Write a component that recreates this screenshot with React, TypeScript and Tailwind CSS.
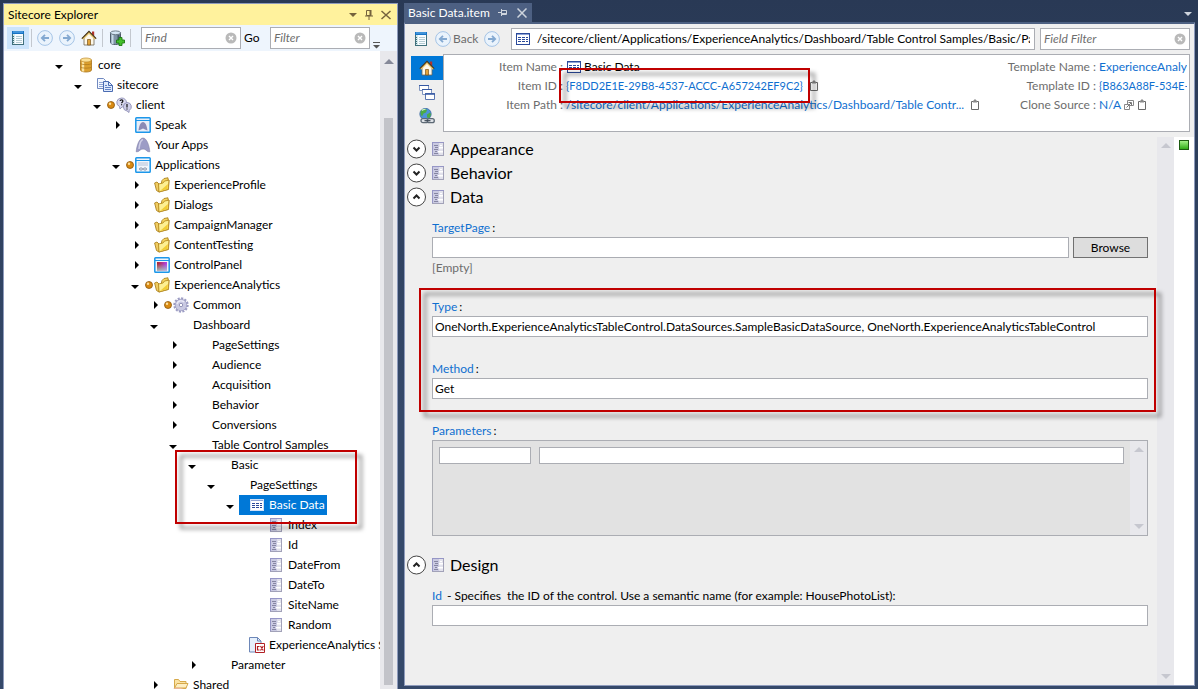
import { ReactNode, useState } from 'react';

type IconName =
  | 'database' | 'pages' | 'chat' | 'speak' | 'apps' | 'window' | 'folder' | 'palette'
  | 'gear' | 'table' | 'form' | 'script' | 'share';

interface TreeItem {
  level: number;
  label: string;
  icon?: IconName;
  state?: 'open' | 'closed';
  dot?: boolean;
  selected?: boolean;
  marked?: boolean;
}

const treeItems: TreeItem[] = [
  { level: 0, label: 'core', icon: 'database', state: 'open' },
  { level: 1, label: 'sitecore', icon: 'pages', state: 'open' },
  { level: 2, label: 'client', icon: 'chat', state: 'open', dot: true },
  { level: 3, label: 'Speak', icon: 'speak', state: 'closed' },
  { level: 3, label: 'Your Apps', icon: 'apps' },
  { level: 3, label: 'Applications', icon: 'window', state: 'open', dot: true },
  { level: 4, label: 'ExperienceProfile', icon: 'folder', state: 'closed' },
  { level: 4, label: 'Dialogs', icon: 'folder', state: 'closed' },
  { level: 4, label: 'CampaignManager', icon: 'folder', state: 'closed' },
  { level: 4, label: 'ContentTesting', icon: 'folder', state: 'closed' },
  { level: 4, label: 'ControlPanel', icon: 'palette', state: 'closed' },
  { level: 4, label: 'ExperienceAnalytics', icon: 'folder', state: 'open', dot: true },
  { level: 5, label: 'Common', icon: 'gear', state: 'closed', dot: true },
  { level: 5, label: 'Dashboard', state: 'open' },
  { level: 6, label: 'PageSettings', state: 'closed' },
  { level: 6, label: 'Audience', state: 'closed' },
  { level: 6, label: 'Acquisition', state: 'closed' },
  { level: 6, label: 'Behavior', state: 'closed' },
  { level: 6, label: 'Conversions', state: 'closed' },
  { level: 6, label: 'Table Control Samples', state: 'open' },
  { level: 7, label: 'Basic', state: 'open', marked: true },
  { level: 8, label: 'PageSettings', state: 'open' },
  { level: 9, label: 'Basic Data', icon: 'table', state: 'open', selected: true },
  { level: 10, label: 'Index', icon: 'form' },
  { level: 10, label: 'Id', icon: 'form' },
  { level: 10, label: 'DateFrom', icon: 'form' },
  { level: 10, label: 'DateTo', icon: 'form' },
  { level: 10, label: 'SiteName', icon: 'form' },
  { level: 10, label: 'Random', icon: 'form' },
  { level: 9, label: 'ExperienceAnalytics S', icon: 'script' },
  { level: 7, label: 'Parameter', state: 'closed' },
  { level: 5, label: 'Shared', icon: 'share', state: 'closed' },
];

function Svg({ children, className = 'w-4 h-4' }: { children: ReactNode; className?: string }) {
  return (
    <svg viewBox="0 0 16 16" className={`shrink-0 ${className}`} fill="none" aria-hidden="true">
      {children}
    </svg>
  );
}

function TableIcon({ light }: { light?: boolean }) {
  return (
    <Svg>
      <rect x="1.5" y="2.5" width="13" height="11" fill="#fff" stroke={light ? '#cfe0f7' : '#2b4a9b'} />
      <path d="M2 3.5h12" stroke="#8ea3d6" />
      <path d="M3 6.5h3M7 6.5h3M11 6.5h2M3 8.5h3M7 8.5h3M11 8.5h2M3 10.5h3M7 10.5h3M11 10.5h2" stroke="#2b4a9b" />
    </Svg>
  );
}

function FormIcon() {
  return (
    <Svg>
      <rect x="2.5" y="1.5" width="11" height="13" fill="#e2e2ec" stroke="#a2a2b8" />
      <path d="M3 2h6v12H3z" fill="#cacae2" />
      <path d="M2 1.5h12M2.5 1v13" stroke="#9696c6" />
      <path d="M4 4.5h4M5 6.5h3M4 8.5h4M5 10.5h2M4 12.5h4" stroke="#8686a2" />
      <path d="M9 6h4v1.500H9zM8 10h5v1.500H8zM10 4h2v1h-2z" fill="#fff" />
    </Svg>
  );
}

function ListIcon() {
  return (
    <Svg>
      <rect x="2.5" y="1.5" width="11" height="13" fill="#f8fcff" stroke="#40707c" />
      <path d="M2 1h12v3H2z" fill="#1673c4" />
      <path d="M3 2h10" stroke="#6cb4ef" />
      <path d="M3 4h2v10H3z" fill="#d4e9ec" />
      <path d="M6 6.5h6M6 8.5h6M6 10.5h6M6 12.5h6" stroke="#b4cbd2" />
      <path d="M3 6.5h1M3 8.5h1M3 10.5h1M3 12.5h1" stroke="#40707c" />
    </Svg>
  );
}

function ArrowCircle({ direction }: { direction: 'left' | 'right' }) {
  return (
    <Svg>
      <circle cx="8" cy="8" r="7.4" fill="#eaf3fc" stroke="#a5c4e6" />
      <path
        d={direction === 'left' ? 'M12 8H5M8 4.8 4.8 8 8 11.2' : 'M4 8h7M8 4.8 11.2 8 8 11.2'}
        stroke="#84a9d1"
        strokeWidth="1.8"
      />
    </Svg>
  );
}

function HomeIcon() {
  return (
    <Svg>
      <path d="M11 1.5h2.2V6H11z" fill="#b3322b" />
      <path d="M3 8 8 3l5 5v7H3z" fill="#fdf8ea" stroke="#6f6654" strokeWidth=".8" />
      <path d="M1.5 9 8 2.5 14.5 9" stroke="#e6c46a" strokeWidth="2" />
      <path d="M.8 8.6 8 1.4l7.2 7.2" stroke="#3f301c" strokeWidth="1.1" />
      <path d="M6.5 9.5h3V15h-3z" fill="#e2a43c" stroke="#7a5318" strokeWidth=".7" />
    </Svg>
  );
}

function DatabaseAddIcon() {
  return (
    <Svg>
      <path d="M1.5 2.5v10c0 1.2 2 2 5 2s5-.8 5-2v-10z" fill="#7f93a6" stroke="#4c5a68" />
      <path d="M3.5 3.5V14" stroke="#c9dae8" strokeWidth="2" />
      <path d="M9.5 4v9" stroke="#46586a" strokeWidth="2" />
      <ellipse cx="6.5" cy="2.8" rx="5" ry="1.9" fill="#d5e6f4" stroke="#6d7d8a" />
      <path d="M10 7.5h3V10h2.500v3H13v2.500h-3V13H7.500v-3H10z" fill="#43c02c" stroke="#1d7a12" strokeWidth=".9" />
    </Svg>
  );
}

function WindowsIcon() {
  return (
    <Svg>
      <path d="M.5 1.5h9v5h-9z" fill="#fff" stroke="#7f94bf" />
      <path d="M0 1.5h10" stroke="#3558a3" />
      <path d="M3.5 5.5h9v5h-9z" fill="#fff" stroke="#7f94bf" />
      <path d="M3 5.5h10" stroke="#3558a3" />
      <path d="M6.5 9.500h9v6h-9z" fill="#fff" stroke="#5a76b0" />
      <path d="M6 10h10" stroke="#3558a3" strokeWidth="1.5" />
    </Svg>
  );
}

function GlobeLinkIcon() {
  return (
    <Svg>
      <circle cx="6.5" cy="6" r="5.7" fill="#4d93d9" stroke="#2f5f99" strokeWidth=".7" />
      <path d="M3 2c2-1.4 4-1 5 0L7 4.5 4.500 5.500 3 8.500C1 6.500 1 3.500 3 2zM8 6.500l3-2 1 2-1.500 3.500-2.500-.5z" fill="#4cab45" />
      <path d="M3 2.5c1-1 2.5-1.2 3.5-1" stroke="#c8f0b8" strokeWidth="1.2" />
      <rect x="2" y="10.700" width="7" height="4" rx="2" fill="#dfe3e8" stroke="#5d6975" strokeWidth="1.3" />
      <rect x="8.300" y="10.700" width="7" height="4" rx="2" fill="#dfe3e8" stroke="#5d6975" strokeWidth="1.3" />
      <path d="M5.5 12.700h6" stroke="#3d4955" strokeWidth="1.2" />
    </Svg>
  );
}

function ClipboardIcon() {
  return (
    <svg viewBox="0 0 10 12" className="w-[10px] h-3 shrink-0" fill="none" aria-hidden="true">
      <path d="M1.5 2.5h7v8h-7z" fill="#fff" stroke="#6a6a6a" />
      <path d="M3 3.5v-2h1v-1h2v1h1v2z" fill="#8a8a8a" />
    </svg>
  );
}

function CloneIcon() {
  return (
    <svg viewBox="0 0 10 12" className="w-[10px] h-3 shrink-0" fill="none" aria-hidden="true">
      <path d="M3.5 1.5h6v5h-6z" stroke="#888" />
      <path d="M.5 5.5h5v5h-5z" fill="#fff" stroke="#888" />
      <path d="M2.5 8.5 7 4M4.5 3.5h3v3" stroke="#777" />
    </svg>
  );
}

function NodeIcon({ name, selected }: { name: IconName; selected?: boolean }) {
  switch (name) {
    case 'database':
      return (
        <Svg>
          <path d="M2.5 3v10c0 1.2 2.500 2 5.500 2s5.500-.8 5.500-2V3z" fill="#dca02e" stroke="#a8741a" strokeWidth=".8" />
          <path d="M5 4v10.500" stroke="#fbe3a0" strokeWidth="2.4" />
          <path d="M2.5 6.500c1 1.500 10 1.500 11 0M2.500 10c1 1.500 10 1.500 11 0" stroke="#a8741a" strokeWidth=".7" />
          <ellipse cx="8" cy="3" rx="5.5" ry="2" fill="#fbdf93" stroke="#bd8a2c" strokeWidth=".7" />
        </Svg>
      );
    case 'pages':
      return (
        <Svg>
          <path d="M.5 1.5h6l2 2v8h-8z" fill="#f4f8ff" stroke="#7089c0" />
          <path d="M2 5.5h5M2 7.5h5M2 9.5h4" stroke="#8fa5d6" />
          <path d="M6.5 4.5h5l4 4v6h-9z" fill="#dfeafd" stroke="#4b6cb2" />
          <path d="M11.5 4.5v4h4" stroke="#4b6cb2" />
          <path d="M8 8.5h2M8 10.5h6M8 12.5h6" stroke="#6283c6" />
        </Svg>
      );
    case 'chat':
      return (
        <Svg>
          <path d="M5.5 1a5 4.5 0 0 0-2 8.500L4 12l2-2a4.700 4.700 0 0 0 4.500-4.500A4.700 4.700 0 0 0 5.500 1z" fill="#d9d9ef" stroke="#8585ae" strokeWidth=".8" />
          <path d="M11 5.500a4.300 4.300 0 0 0 0 8.500l2 1.500.3-2.200A4.200 4.200 0 0 0 11 5.500z" fill="#cfcfe9" stroke="#8585ae" strokeWidth=".8" />
          <path d="M4.200 4c0-1.600 2.700-1.600 2.700.1 0 1.200-1.300 1-1.300 2.200M5.600 7.200v1M11 7v3.500M11 11.400v1" stroke="#111" strokeWidth="1.2" />
        </Svg>
      );
    case 'speak':
      return (
        <Svg>
          <rect x=".8" y=".8" width="14.4" height="14.4" rx=".8" fill="#e8eef8" stroke="#1c97ea" strokeWidth="1.5" />
          <path d="M1 3.5h14" stroke="#1c97ea" />
          <path d="M3.500 13.500c.6-4.500 2-8.500 4.500-8.500s3.900 4 4.500 8.500l-2.500-1-2-1-2 1z" fill="#8a8ab5" />
        </Svg>
      );
    case 'apps':
      return (
        <Svg>
          <path d="M1.200 14.800C1.700 8.500 4.300 1 8 1s6.300 7.500 6.800 13.800c-1.700 0-3-.6-4-1.900-1.500-1.100-4-1.100-5.500 0-1 1.300-2.400 1.900-4.100 1.900z" fill="#9c9cc6" stroke="#7f7fa6" strokeWidth=".6" />
          <path d="M4 12C4.500 7 6 3 8 2.500" stroke="#cfcfe6" strokeWidth="1.5" />
        </Svg>
      );
    case 'window':
      return (
        <Svg>
          <rect x=".8" y=".8" width="14.4" height="14.4" rx=".8" fill="#f2f6fb" stroke="#1c97ea" strokeWidth="1.5" />
          <path d="M1 3.5h14" stroke="#1c97ea" />
          <path d="M3 5h10v4H3z" fill="#d3dcea" />
          <rect x="4.5" y="11" width="3" height="2" rx="1" stroke="#75829b" strokeWidth=".9" />
          <rect x="8.5" y="11" width="3" height="2" rx="1" stroke="#75829b" strokeWidth=".9" />
        </Svg>
      );
    case 'folder':
      return (
        <Svg>
          <path d="M8 3.5 10 1.500l4-.7v2l1 .2-.5 9.500L5 15z" fill="#f5d560" stroke="#ab8220" strokeWidth=".9" />
          <path d="m.6 6 2.400-1L5 7v8l-2.500-1.500z" fill="#f0cc62" stroke="#ab8220" strokeWidth=".9" />
          <path d="M4.500 7 9 6l1.500-2 4.500-.8-.8 9L5 15z" fill="#fdef92" stroke="#b88c22" strokeWidth=".9" />
          <path d="m6 14 7.500-2 .4-5z" fill="#f2cd35" />
        </Svg>
      );
    case 'palette':
      return (
        <Svg>
          <defs>
            <linearGradient id="hue" x1="0" x2="1">
              <stop stopColor="#b02a2a" />
              <stop offset="1" stopColor="#b044f0" />
            </linearGradient>
            <linearGradient id="fade" x1="0" x2="0" y1="0" y2="1">
              <stop offset=".2" stopColor="#a0d8d0" stopOpacity="0" />
              <stop offset="1" stopColor="#a0d8d0" stopOpacity=".8" />
            </linearGradient>
          </defs>
          <rect x=".8" y=".8" width="14.4" height="14.4" rx=".8" fill="#f2f6fb" stroke="#1c97ea" strokeWidth="1.5" />
          <path d="M1 3.5h14" stroke="#1c97ea" />
          <path d="M3 5h10v8.500H3z" fill="url(#hue)" />
          <path d="M3 5h10v8.500H3z" fill="url(#fade)" />
        </Svg>
      );
    case 'gear':
      return (
        <Svg>
          <circle cx="8" cy="8" r="6.7" stroke="#9c9cc4" strokeWidth="2" strokeDasharray="2.1 1.4" />
          <circle cx="8" cy="8" r="5.8" fill="#c9c9e2" stroke="#9292ba" strokeWidth=".7" />
          <path d="M4 7a4.200 4.200 0 0 1 7-2" stroke="#ececf8" strokeWidth="1.3" />
          <circle cx="8" cy="8" r="1.7" fill="#fff" stroke="#8080aa" strokeWidth=".8" />
        </Svg>
      );
    case 'table':
      return <TableIcon light={selected} />;
    case 'form':
      return <FormIcon />;
    case 'script':
      return (
        <Svg>
          <path d="M.5 .5h8L12 4v11H.5z" fill="#e6f0fc" stroke="#6d87b8" />
          <path d="M8.500 .5V4H12" stroke="#6d87b8" />
          <path d="M6.500 6.500h9v9h-9z" fill="#fff" stroke="#b11f24" />
          <path d="M10.500 9.500h-2V13h2M11.500 9l2.800 4.500M14.300 9l-2.800 4.500" stroke="#b11f24" strokeWidth="1.2" />
        </Svg>
      );
    case 'share':
      return (
        <Svg>
          <path d="M1.500 11.500v-9h4l1.500 2h6v7z" fill="#fbe3a4" stroke="#d6a94a" />
          <path d="M1.500 11 4 6.500h11L13 11z" fill="#fdeec3" stroke="#d6a94a" />
          <path d="M0 12c3-2 8-1.500 12 .5V15H0z" fill="#eab79c" />
          <path d="M12 12h3v3h-3z" fill="#64748b" />
        </Svg>
      );
  }
}

// Red frame laid over the parts of the page being pointed out
function Highlight({ className }: { className: string }) {
  return (
    <div
      className={`absolute z-10 pointer-events-none border-2 border-[#c00000] drop-shadow-[5px_5px_2px_rgba(0,0,0,0.5)] ${className}`}
    />
  );
}

function TreeRow({ item }: { item: TreeItem }) {
  return (
    <li className="relative h-5 flex items-center whitespace-nowrap" style={{ paddingLeft: 51 + item.level * 19 }}>
      <span className="w-[13px] shrink-0 flex justify-start">
        {item.state === 'open' && (
          <svg viewBox="0 0 8 4" className="w-2 h-1 mt-[3px]" aria-hidden="true"><path d="M0 0h8L4 4z" /></svg>
        )}
        {item.state === 'closed' && (
          <svg viewBox="0 0 4 8" className="w-1 h-2 ml-1" aria-hidden="true"><path d="M0 0v8l4-4z" /></svg>
        )}
      </span>
      <span className={`h-5 flex items-center pr-[2px] ${item.selected ? 'bg-[#0078d7] text-white' : ''}`}>
        <span className="w-[10px] shrink-0 flex justify-end pr-px">
          {item.dot && (
            <svg viewBox="0 0 8 8" className="w-2 h-2" aria-hidden="true">
              <circle cx="4" cy="4" r="3.5" fill="#d98a12" stroke="#8a560c" strokeWidth=".8" />
              <circle cx="3" cy="2.8" r="1.2" fill="#ffe2a0" />
            </svg>
          )}
        </span>
        <span className="w-5 shrink-0">{item.icon && <NodeIcon name={item.icon} selected={item.selected} />}</span>
        {item.label}
      </span>
      {item.marked && <Highlight className="left-[171px] top-[-5px] w-[182px] h-[74px]" />}
    </li>
  );
}

function SearchBox({ label, className }: { label: string; className: string }) {
  const [value, setValue] = useState('');
  return (
    <div className={`flex items-center h-[22px] bg-white border border-[#abadb3] pr-[3px] ${className}`}>
      <input
        type="text"
        aria-label={label}
        placeholder={label}
        value={value}
        onChange={(e) => setValue(e.target.value)}
        className="flex-1 min-w-0 px-[3px] bg-transparent outline-none placeholder:italic placeholder:text-[#6d6d6d]"
      />
      <button type="button" aria-label={`Clear ${label}`} onClick={() => setValue('')}>
        <svg viewBox="0 0 12 12" className="w-3 h-3">
          <circle cx="6" cy="6" r="5.5" fill="#b9b9b9" />
          <path d="m4 4 4 4M8 4 4 8" stroke="#fff" strokeWidth="1.4" />
        </svg>
      </button>
    </div>
  );
}

function Explorer() {
  return (
    <aside className="w-[395px] shrink-0 flex flex-col bg-white border border-b-0 border-[#8e9bbc] overflow-hidden">
      <header className="h-[21px] shrink-0 flex items-center gap-[7px] pl-1 pr-[6px] bg-[#fff29d]">
        <h1 className="flex-1">Sitecore Explorer</h1>
        <button type="button" aria-label="Window menu">
          <svg viewBox="0 0 8 4" className="w-2 h-1"><path d="M0 0h8L4 4z" fill="#75633d" /></svg>
        </button>
        <button type="button" aria-label="Auto hide">
          <svg viewBox="0 0 10 12" className="w-[10px] h-3" fill="none" stroke="#75633d">
            <path d="M2.5 1.5h4v5h-4zM1 7h8M5 7v4" /><path d="M6.5 1v6" strokeWidth="2" />
          </svg>
        </button>
        <button type="button" aria-label="Close">
          <svg viewBox="0 0 10 10" className="w-[10px] h-[10px]" fill="none" stroke="#75633d" strokeWidth="1.5"><path d="m.5 1 9 8M9.5 1l-9 8" /></svg>
        </button>
      </header>

      <div className="h-[26px] shrink-0 flex items-center px-[3px] bg-[#eef5fd]">
        <button type="button" aria-label="Show list" className="w-[22px] h-[22px] flex items-center justify-center bg-[#cce4fb]"><ListIcon /></button>
        <span className="w-px h-[18px] ml-[2px] mr-[5px] bg-[#c3c8cf]" />
        <button type="button" aria-label="Back"><ArrowCircle direction="left" /></button>
        <button type="button" aria-label="Forward" className="ml-[6px]"><ArrowCircle direction="right" /></button>
        <button type="button" aria-label="Home" className="ml-[6px]"><HomeIcon /></button>
        <span className="w-px h-[18px] ml-[5px] mr-[6px] bg-[#c3c8cf]" />
        <button type="button" aria-label="Add database"><DatabaseAddIcon /></button>
        <span className="w-px h-[18px] ml-[5px] mr-[10px] bg-[#c3c8cf]" />
        <SearchBox label="Find" className="w-[100px]" />
        <button type="button" className="w-[29px] pl-[3px] text-left">Go</button>
        <SearchBox label="Filter" className="w-[100px]" />
        <button type="button" aria-label="More" className="ml-[3px] self-end mb-[2px]">
          <svg viewBox="0 0 7 7" className="w-[7px] h-[7px]"><path d="M0 0h7v1H0zM0 3h7L3.500 6.500z" fill="#555" /></svg>
        </button>
      </div>

      <div className="flex-1 min-h-0 flex">
        <ul className="flex-1 min-w-0 pt-1 overflow-hidden">
          {treeItems.map((item, index) => (
            <TreeRow key={`${item.label}-${index}`} item={item} />
          ))}
        </ul>
        <div className="w-[17px] shrink-0 flex flex-col items-center pt-2 pb-1 bg-[#e8e8ec]">
          <svg viewBox="0 0 10 5" className="w-[10px] h-[5px] shrink-0" aria-hidden="true"><path d="M0 5h10L5 0z" fill="#868999" /></svg>
          <div className="flex-1 w-[9px] mt-[54px] bg-[#c2c3c9]" />
        </div>
      </div>
    </aside>
  );
}

function Section({ title, open, children }: { title: string; open?: boolean; children?: ReactNode }) {
  return (
    <section>
      <h2 className="h-6 flex items-center text-base leading-6">
        <button type="button" aria-label={`Toggle ${title}`} aria-expanded={!!open} className="mr-[3px]">
          <svg viewBox="0 0 20 20" className="w-5 h-5" fill="none">
            <circle cx="9.5" cy="10" r="9" fill="#fff" stroke="#444" />
            <path d={open ? 'm6.5 11.5 3-3 3 3' : 'm6.5 8.5 3 3 3-3'} stroke="#222" strokeWidth="2" />
          </svg>
        </button>
        <span className="mr-1"><FormIcon /></span>
        {title}
      </h2>
      {children}
    </section>
  );
}

function TextField({ id, label, hint, defaultValue, children }: {
  id: string;
  label: string;
  hint?: string;
  defaultValue?: string;
  children?: ReactNode;
}) {
  return (
    <div>
      <label htmlFor={id} className="block h-[17px] leading-4 whitespace-pre">
        <span className="pr-[2px] text-[#0f6fd0]">{label}</span>
        {hint}:
      </label>
      <div className="flex gap-1">
        <input
          id={id}
          type="text"
          defaultValue={defaultValue}
          className="flex-1 min-w-0 h-[21px] px-[2px] bg-white border border-[#abadb3] outline-none"
        />
        {children}
      </div>
    </div>
  );
}

function ScrollArrows() {
  return (
    <div className="w-[17px] shrink-0 flex flex-col items-center justify-between py-[6px] bg-[#e8e8ec]" aria-hidden="true">
      <svg viewBox="0 0 10 5" className="w-[10px] h-[5px]"><path d="M0 5h10L5 0z" fill="#c6c7cf" /></svg>
      <svg viewBox="0 0 10 5" className="w-[10px] h-[5px]"><path d="M0 0h10L5 5z" fill="#c6c7cf" /></svg>
    </div>
  );
}

function ItemInfo() {
  return (
    <div className="flex-1 min-w-0 h-[78px] flex pt-[2px] pr-[2px] leading-[19px] whitespace-nowrap bg-white border border-[#abadb3]">
      <dl className="flex-1 min-w-0 grid grid-cols-[119px_1fr] auto-rows-[19px] gap-x-[3px] content-start">
        <dt className="text-right text-[#6d6d6d]">Item Name :</dt>
        <dd className="flex items-center gap-[2px]"><TableIcon /> Basic Data</dd>
        <dt className="text-right text-[#6d6d6d]">Item ID :</dt>
        <dd className="relative flex items-center gap-[6px]">
          <a href="#id" className="text-[11px] text-[#0f6fd0]">{'{F8DD2E1E-29B8-4537-ACCC-A657242EF9C2}'}</a>
          <ClipboardIcon />
          <Highlight className="left-[-7px] top-[-8px] w-[251px] h-[35px]" />
        </dd>
        <dt className="text-right text-[#6d6d6d]">Item Path :</dt>
        <dd className="flex items-center gap-[6px]">
          <a href="#path" className="text-[#0f6fd0]">/sitecore/client/Applications/ExperienceAnalytics/Dashboard/Table Contr...</a>
          <ClipboardIcon />
        </dd>
      </dl>
      <dl className="w-[200px] shrink-0 grid grid-cols-[109px_1fr] auto-rows-[19px] gap-x-[3px] content-start overflow-hidden">
        <dt className="text-right text-[#6d6d6d]">Template Name :</dt>
        <dd><a href="#template" className="text-[#0f6fd0]">ExperienceAnalytics</a></dd>
        <dt className="text-right text-[#6d6d6d]">Template ID :</dt>
        <dd><a href="#template-id" className="text-[11px] text-[#0f6fd0]">{'{B863A88F-534E-'}</a></dd>
        <dt className="text-right text-[#6d6d6d]">Clone Source :</dt>
        <dd className="flex items-center gap-[3px]">
          <a href="#clone" className="text-[#0f6fd0]">N/A</a>
          <CloneIcon />
          <ClipboardIcon />
        </dd>
      </dl>
    </div>
  );
}

function Editor() {
  return (
    <main className="flex-1 min-w-0 flex flex-col pb-[3px]">
      <div className="h-[19px] shrink-0 flex justify-between">
        <div className="w-32 flex items-center pl-1 bg-[#4d6082] text-white whitespace-nowrap">
          <span className="flex-1">Basic Data.item</span>
          <button type="button" aria-label="Pin tab" className="mr-[10px]">
            <svg viewBox="0 0 9 9" className="w-[9px] h-[9px]" fill="none" stroke="#ced4dd"><path d="M0 4.5h3M3.500 1v7M3.500 2.500h5v4h-5M4 5.500h4" /></svg>
          </button>
          <button type="button" aria-label="Close tab" className="mr-[5px]">
            <svg viewBox="0 0 10 10" className="w-[10px] h-[10px]" fill="none" stroke="#ced4dd" strokeWidth="1.5"><path d="m.5 .5 9 9M9.500 .5l-9 9" /></svg>
          </button>
        </div>
        <button type="button" aria-label="Open documents" className="self-end mr-[3px] mb-[6px]">
          <svg viewBox="0 0 8 4" className="w-2 h-1"><path d="M0 0h8L4 4z" fill="#ced4dd" /></svg>
        </button>
      </div>

      <div className="flex-1 min-h-0 flex flex-col bg-[#efefef] border border-t-2 border-[#8e9bbc] border-t-[#4d6082]">
        <div className="h-[30px] shrink-0 flex items-center pb-px pl-2 pr-1 text-[#6d6d6d]">
          <button type="button" aria-label="Show list"><ListIcon /></button>
          <button type="button" className="w-[45px] ml-[6px] mr-[4px] flex items-center gap-[2px]"><ArrowCircle direction="left" /> Back</button>
          <button type="button" aria-label="Forward" className="mr-[11px]"><ArrowCircle direction="right" /></button>
          <div className="flex-1 min-w-0 h-[22px] flex items-center pl-[3px] pr-1 bg-white border border-[#abadb3]">
            <TableIcon />
            <input
              type="text"
              aria-label="Item path"
              defaultValue="/sitecore/client/Applications/ExperienceAnalytics/Dashboard/Table Control Samples/Basic/PageSettings/Basic Data"
              className="flex-1 min-w-0 ml-[6px] text-black outline-none"
            />
          </div>
          <SearchBox label="Field Filter" className="w-[150px] ml-[5px]" />
        </div>

        <div className="shrink-0 flex pl-[6px] pr-1">
          <nav className="w-8 shrink-0 flex flex-col pt-[2px]" aria-label="Item views">
            <button type="button" aria-label="Home" className="h-6 flex items-center justify-center bg-[#0078d7]"><HomeIcon /></button>
            <button type="button" aria-label="Windows" className="h-6 flex items-center justify-center"><WindowsIcon /></button>
            <button type="button" aria-label="Links" className="h-6 flex items-center justify-center"><GlobeLinkIcon /></button>
          </nav>
          <ItemInfo />
        </div>

        <div className="flex-1 min-h-0 mt-[5px] flex">
          <div className="flex-1 min-w-0 pl-[2px] pr-[9px]">
            <Section title="Appearance" />
            <Section title="Behavior" />
            <Section title="Data" open>
              <div className="pl-[25px] pt-[11px]">
                <TextField id="target-page" label="TargetPage">
                  <button type="button" className="w-[75px] h-[21px] bg-[#dddddd] border border-[#707070]">Browse</button>
                </TextField>
                <p className="h-5 mb-[21px] pt-[2px] leading-4 text-[#6d6d6d]">[Empty]</p>
                <div className="relative flex flex-col gap-6">
                  <TextField
                    id="type"
                    label="Type"
                    defaultValue="OneNorth.ExperienceAnalyticsTableControl.DataSources.SampleBasicDataSource, OneNorth.ExperienceAnalyticsTableControl"
                  />
                  <TextField id="method" label="Method" defaultValue="Get" />
                  <Highlight className="left-[-13px] right-[-8px] top-[-11px] bottom-[-13px]" />
                </div>
                <fieldset className="mt-6">
                  <legend className="h-[17px] leading-4"><span className="pr-[2px] text-[#0f6fd0]">Parameters</span>:</legend>
                  <div className="h-24 flex bg-[#e2e2e2] border border-[#abadb3]">
                    <div className="flex-1 min-w-0 flex gap-2 p-[6px]">
                      <input type="text" aria-label="Parameter name" className="w-[92px] h-[17px] bg-white border border-[#abadb3]" />
                      <input type="text" aria-label="Parameter value" className="flex-1 min-w-0 h-[17px] bg-white border border-[#abadb3]" />
                    </div>
                    <ScrollArrows />
                  </div>
                </fieldset>
              </div>
            </Section>
            <div className="h-[17px]" />
            <Section title="Design" open>
              <div className="pl-[25px] pt-[11px]">
                <TextField id="control-id" label="Id" hint=" - Specifies  the ID of the control. Use a semantic name (for example: HousePhotoList)" />
              </div>
            </Section>
          </div>
          <ScrollArrows />
          <div className="w-5 shrink-0 pt-[3px] pl-[5px] bg-white">
            <svg viewBox="0 0 10 10" className="w-[10px] h-[10px]" role="img" aria-label="Valid">
              <defs>
                <linearGradient id="valid" x1="0" x2="0" y1="0" y2="1">
                  <stop stopColor="#a8f48c" />
                  <stop offset="1" stopColor="#28a80f" />
                </linearGradient>
              </defs>
              <rect x=".5" y=".5" width="9" height="9" fill="url(#valid)" stroke="#1c5a10" />
            </svg>
          </div>
        </div>
      </div>
    </main>
  );
}

export default function App() {
  return (
    <div className="h-screen flex gap-[6px] pt-[3px] pl-[3px] pr-[3px] overflow-hidden bg-linear-to-b from-[#293955] to-[#35496a] to-60% font-[Lato,'Open_Sans',sans-serif] text-xs leading-4 text-black">
      <Explorer />
      <Editor />
    </div>
  );
}
